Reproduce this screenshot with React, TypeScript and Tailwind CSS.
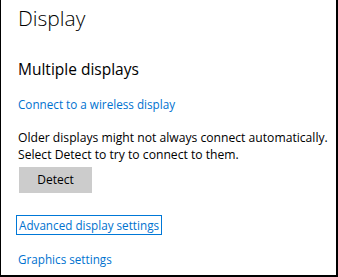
export default function App() {
  return (
    <div
      className="w-[338px] h-[277px] bg-white border-l border-r-2 border-b-2 border-black pl-[17px] text-black whitespace-nowrap"
      style={{ fontFamily: '"Open Sans", "Noto Sans", sans-serif' }}
    >
      <div className="pt-[4px] text-[21px] leading-[28px] font-light">Display</div>
      <div className="mt-[27px] text-[15.5px] leading-[20px]">Multiple displays</div>
      <div className="mt-[16px] text-[11.7px] leading-[18px] text-[#0072cf]">Connect to a wireless display</div>
      <div className="mt-[16px] text-[12.15px] leading-[17px]">
        <div>Older displays might not always connect automatically.</div>
        <div>Select Detect to try to connect to them.</div>
      </div>
      <button className="mt-[4px] w-[73px] h-[26px] bg-[#cccccc] text-[12px] leading-[18px] flex items-center justify-center ml-[1px]">
        Detect
      </button>
      <div className="mt-[22px] ml-[-2px] inline-block border border-[#0078d7] px-[2px] h-[20px] text-[11.7px] leading-[18px] text-[#0072cf]">
        Advanced display settings
      </div>
      <div className="mt-[14px] text-[11.7px] leading-[18px] text-[#0072cf]">Graphics settings</div>
    </div>
  );
}
